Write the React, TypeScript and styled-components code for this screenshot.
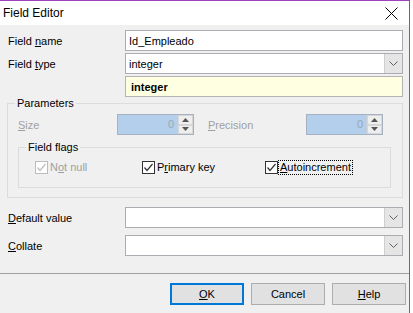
import React from "react";
import styled, { createGlobalStyle, css } from "styled-components";

const GlobalStyle = createGlobalStyle`
  html, body {
    margin: 0;
    padding: 0;
    background: #ffffff;
  }
  body {
    font-family: "Liberation Sans", Arial, sans-serif;
    font-size: 11px;
    color: #000;
  }
  * {
    box-sizing: border-box;
  }
`;

const Window = styled.div`
  width: 410px;
  height: 313px;
  display: flex;
  flex-direction: column;
  background: #f0f0f0;
  border-top: 1px solid #9d45b8;
  border-right: 1px solid #9d45b8;
  overflow: hidden;
`;

const TitleBar = styled.div`
  height: 24px;
  flex: none;
  background: #fff;
  display: flex;
  align-items: center;
  justify-content: space-between;
  padding: 0 11px 0 3px;
  font-size: 12px;
`;

const Body = styled.div`
  flex: 1;
  padding: 5px 6px 0 7px;
`;

const FormGrid = styled.div<{ gap: number }>`
  display: grid;
  grid-template-columns: 118px 1fr;
  row-gap: ${p => p.gap}px;
  align-items: center;
`;

const Label = styled.div<{ disabled?: boolean }>`
  padding-left: 1px;
  white-space: nowrap;
  color: ${p => (p.disabled ? "#a0a0a0" : "#000")};
`;

const Acc = styled.span`
  text-decoration: underline;
`;

const boxBase = css`
  height: 21px;
  border: 1px solid #abadb3;
  display: flex;
  align-items: center;
`;

const TextBox = styled.div`
  ${boxBase};
  background: #fff;
  padding: 0 3px;
`;

const ComboBox = styled.div`
  ${boxBase};
  background: #fff;
  padding-left: 3px;
  .value {
    flex: 1;
  }
`;

const DropButton = styled.div`
  width: 18px;
  height: 19px;
  background: #e5e5e5;
  border-left: 1px solid #cfcfcf;
  display: flex;
  align-items: center;
  justify-content: center;
`;

const Hint = styled.div`
  ${boxBase};
  background: #ffffe1;
  border-color: #b4b4b4;
  padding-left: 5px;
  font-weight: bold;
`;

const Group = styled.fieldset<{ pad: string }>`
  margin: 0;
  border: 1px solid #dcdcdc;
  padding: ${p => p.pad};
  min-width: 0;
`;

const Legend = styled.legend<{ shift: number }>`
  padding: 0 2px;
  margin-left: ${p => p.shift}px;
  line-height: 13px;
`;

const ParamRow = styled.div`
  display: flex;
  align-items: center;
  height: 21px;
`;

const ParamLabel = styled(Label)<{ w: number; ml?: number }>`
  width: ${p => p.w}px;
  padding-left: 0;
  margin-left: ${p => p.ml || 0}px;
`;

const Spin = styled.div`
  width: 77px;
  height: 21px;
  display: flex;
  border: 1px solid #a6b2c2;
  background: #b3cfec;
  .num {
    flex: 1;
    text-align: right;
    padding-right: 3px;
    line-height: 19px;
    color: #97a6b8;
  }
`;

const SpinButtons = styled.div`
  width: 16px;
  display: flex;
  flex-direction: column;
  border-left: 1px solid #c4ccd6;
`;

const SpinHalf = styled.div`
  flex: 1;
  background: #eeeeee;
  border: 1px solid #d6d6d6;
  display: flex;
  align-items: center;
  justify-content: center;
`;

const FlagsGroup = styled(Group)`
  width: 373px;
  margin-top: 6px;
`;

const FlagRow = styled.div`
  display: grid;
  grid-template-columns: 107px 123px 1fr;
  height: 15px;
  align-items: center;
`;

const Check = styled.div<{ disabled?: boolean }>`
  display: flex;
  align-items: center;
  color: ${p => (p.disabled ? "#a0a0a0" : "#000")};
`;

const CheckBox = styled.div<{ disabled?: boolean }>`
  width: 13px;
  height: 13px;
  flex: none;
  background: #fff;
  border: 1px solid ${p => (p.disabled ? "#bcbcbc" : "#333")};
  display: flex;
  align-items: center;
  justify-content: center;
`;

const CheckText = styled.span<{ focused?: boolean }>`
  margin-left: 1px;
  padding: 0 1px;
  line-height: 13px;
  ${p =>
    p.focused &&
    css`
      outline: 1px dotted #000;
    `}
`;

const Lower = styled(FormGrid)`
  margin-top: 9px;
`;

const Footer = styled.div`
  height: 40px;
  flex: none;
  border-top: 1px solid #a0a0a0;
  display: flex;
  justify-content: flex-end;
  gap: 7px;
  padding: 9px 3px 0 0;
`;

const Button = styled.div<{ primary?: boolean }>`
  width: 74px;
  height: 22px;
  background: #e1e1e1;
  border: ${p => (p.primary ? "2px solid #0078d7" : "1px solid #adadad")};
  display: flex;
  align-items: center;
  justify-content: center;
`;

function Chevron() {
  return (
    <svg width="9" height="5" viewBox="0 0 9 5">
      <polyline points="0.5,0.5 4.5,4.5 8.5,0.5" fill="none" stroke="#606060" strokeWidth="1" />
    </svg>
  );
}

function Combo({ value }: { value?: string }) {
  return (
    <ComboBox>
      <span className="value">{value}</span>
      <DropButton>
        <Chevron />
      </DropButton>
    </ComboBox>
  );
}

function SpinBox() {
  return (
    <Spin>
      <span className="num">0</span>
      <SpinButtons>
        <SpinHalf>
          <svg width="7" height="4" viewBox="0 0 7 4">
            <polygon points="0,4 3.5,0 7,4" fill="#555" />
          </svg>
        </SpinHalf>
        <SpinHalf>
          <svg width="7" height="4" viewBox="0 0 7 4">
            <polygon points="0,0 3.5,4 7,0" fill="#555" />
          </svg>
        </SpinHalf>
      </SpinButtons>
    </Spin>
  );
}

function Flag({
  disabled,
  focused,
  children
}: {
  disabled?: boolean;
  focused?: boolean;
  children: React.ReactNode;
}) {
  const stroke = disabled ? "#bcbcbc" : "#333";
  return (
    <Check disabled={disabled}>
      <CheckBox disabled={disabled}>
        <svg width="11" height="11" viewBox="0 0 11 11">
          <polyline points="1.5,5.5 4,8.5 9.5,2" fill="none" stroke={stroke} strokeWidth="1.2" />
        </svg>
      </CheckBox>
      <CheckText focused={focused}>{children}</CheckText>
    </Check>
  );
}

export default function App() {
  return (
    <>
      <GlobalStyle />
      <Window>
        <TitleBar>
          <span>Field Editor</span>
          <svg width="13" height="13" viewBox="0 0 13 13">
            <path d="M0.5 0.5 L12.5 12.5 M12.5 0.5 L0.5 12.5" stroke="#000" strokeWidth="1" />
          </svg>
        </TitleBar>
        <Body>
          <FormGrid gap={2}>
            <Label>
              Field <Acc>n</Acc>ame
            </Label>
            <TextBox>Id_Empleado</TextBox>
            <Label>
              Field <Acc>t</Acc>ype
            </Label>
            <Combo value="integer" />
            <span />
            <Hint>integer</Hint>
          </FormGrid>
          <Group pad="4px 0 9px 10px">
            <Legend shift={-3}>Parameters</Legend>
            <ParamRow>
              <ParamLabel disabled w={99}>
                <Acc>S</Acc>ize
              </ParamLabel>
              <SpinBox />
              <ParamLabel disabled w={98} ml={14}>
                <Acc>P</Acc>recision
              </ParamLabel>
              <SpinBox />
            </ParamRow>
            <FlagsGroup pad="6px 0 12px 16px">
              <Legend shift={-9}>Field flags</Legend>
              <FlagRow>
                <Flag disabled>
                  N<Acc>o</Acc>t null
                </Flag>
                <Flag>
                  P<Acc>r</Acc>imary key
                </Flag>
                <Flag focused>
                  <Acc>A</Acc>utoincrement
                </Flag>
              </FlagRow>
            </FlagsGroup>
          </Group>
          <Lower gap={7}>
            <Label>
              <Acc>D</Acc>efault value
            </Label>
            <Combo />
            <Label>
              <Acc>C</Acc>ollate
            </Label>
            <Combo />
          </Lower>
        </Body>
        <Footer>
          <Button primary>
            <Acc>O</Acc>K
          </Button>
          <Button>Cancel</Button>
          <Button>
            <Acc>H</Acc>elp
          </Button>
        </Footer>
      </Window>
    </>
  );
}
